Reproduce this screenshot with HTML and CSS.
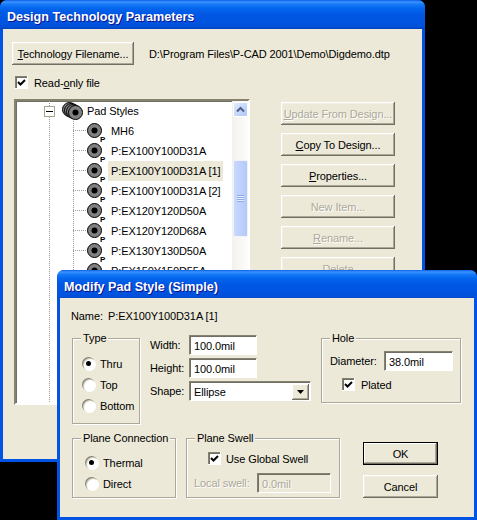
FILE: index.html
```html
<!DOCTYPE html>
<html lang="en">
<head>
<meta charset="utf-8">
<title>Design Technology Parameters</title>
<link rel="stylesheet" href="styles.css">
</head>
<body>
<svg class="defs" width="0" height="0" aria-hidden="true">
  <defs>
    <g id="disc">
      <circle cx="7.5" cy="7.5" r="7" fill="#808080" stroke="#000" stroke-width="1"/>
      <circle cx="7.5" cy="7.5" r="3" fill="#000"/>
    </g>
    <path id="tick" d="M1 4l2.500 2.500L8 2" fill="none" stroke="#000" stroke-width="2"/>
  </defs>
</svg>

<section class="window window-main">
  <header class="titlebar">Design Technology Parameters</header>
  <div class="client client-main">
    <div class="file-row">
      <button class="btn btn-file"><span><u>T</u>echnology Filename...</span></button>
      <span class="path">D:\Program Files\P-CAD 2001\Demo\Digdemo.dtp</span>
    </div>
    <label class="check check-readonly">
      <span class="checkbox"><svg width="9" height="9" viewBox="0 0 9 9"><use href="#tick"/></svg></span>
      <span>Read-<u>o</u>nly file</span>
    </label>
    <div class="main-row">
      <div class="tree">
        <div class="tree-items">
          <div class="tree-row tree-root">
            <span class="expander"></span>
            <svg class="stack-icon" width="21" height="18" viewBox="0 0 21 18">
              <use href="#disc" x="0" y="0"/><use href="#disc" x="2" y="1"/><use href="#disc" x="4" y="2"/><use href="#disc" x="6" y="3"/>
            </svg>
            <span class="tree-label">Pad Styles</span>
          </div>
          <div class="tree-row tree-leaf"><svg class="pad-icon" width="17" height="20" viewBox="0 0 17 20"><use href="#disc"/><text x="13" y="19" class="pad-p">P</text></svg><span class="tree-label">MH6</span></div>
          <div class="tree-row tree-leaf"><svg class="pad-icon" width="17" height="20" viewBox="0 0 17 20"><use href="#disc"/><text x="13" y="19" class="pad-p">P</text></svg><span class="tree-label">P:EX100Y100D31A</span></div>
          <div class="tree-row tree-leaf"><svg class="pad-icon" width="17" height="20" viewBox="0 0 17 20"><use href="#disc"/><text x="13" y="19" class="pad-p">P</text></svg><span class="tree-label tree-selected">P:EX100Y100D31A [1]</span></div>
          <div class="tree-row tree-leaf"><svg class="pad-icon" width="17" height="20" viewBox="0 0 17 20"><use href="#disc"/><text x="13" y="19" class="pad-p">P</text></svg><span class="tree-label">P:EX100Y100D31A [2]</span></div>
          <div class="tree-row tree-leaf"><svg class="pad-icon" width="17" height="20" viewBox="0 0 17 20"><use href="#disc"/><text x="13" y="19" class="pad-p">P</text></svg><span class="tree-label">P:EX120Y120D50A</span></div>
          <div class="tree-row tree-leaf"><svg class="pad-icon" width="17" height="20" viewBox="0 0 17 20"><use href="#disc"/><text x="13" y="19" class="pad-p">P</text></svg><span class="tree-label">P:EX120Y120D68A</span></div>
          <div class="tree-row tree-leaf"><svg class="pad-icon" width="17" height="20" viewBox="0 0 17 20"><use href="#disc"/><text x="13" y="19" class="pad-p">P</text></svg><span class="tree-label">P:EX130Y130D50A</span></div>
          <div class="tree-row tree-leaf"><svg class="pad-icon" width="17" height="20" viewBox="0 0 17 20"><use href="#disc"/><text x="13" y="19" class="pad-p">P</text></svg><span class="tree-label">P:EX150Y150D55A</span></div>
        </div>
        <div class="scrollbar">
          <div class="scroll-up"><svg width="9" height="7" viewBox="0 0 9 7"><path d="M1 5.500l3.500-3.500L8 5.500" fill="none" stroke="#4D6185" stroke-width="2"/></svg></div>
          <div class="scroll-thumb"><span class="grip"></span></div>
        </div>
      </div>
      <div class="side-buttons">
        <button class="btn btn-side" disabled><span><u>U</u>pdate From Design...</span></button>
        <button class="btn btn-side"><span><u>C</u>opy To Design...</span></button>
        <button class="btn btn-side"><span><u>P</u>roperties...</span></button>
        <button class="btn btn-side" disabled><span>New Item...</span></button>
        <button class="btn btn-side" disabled><span><u>R</u>ename...</span></button>
        <button class="btn btn-side" disabled><span>Delete</span></button>
      </div>
    </div>
  </div>
</section>

<section class="window window-pad">
  <header class="titlebar titlebar-pad">Modify Pad Style (Simple)</header>
  <div class="client client-pad">
    <div class="name-row"><span class="name-label">Name:</span><span>P:EX100Y100D31A [1]</span></div>
    <div class="upper-row">
      <div class="group group-type">
        <span class="group-title">Type</span>
        <div class="radio-row"><span class="radio radio-on"></span><span>Thru</span></div>
        <div class="radio-row"><span class="radio"></span><span>Top</span></div>
        <div class="radio-row"><span class="radio"></span><span>Bottom</span></div>
      </div>
      <div class="fields">
        <div class="field-row"><span class="field-label">Width:</span><span class="field field-size">100.0mil</span></div>
        <div class="field-row"><span class="field-label">Height:</span><span class="field field-size">100.0mil</span></div>
        <div class="field-row"><span class="field-label">Shape:</span><span class="field field-combo">Ellipse<span class="combo-arrow"><svg width="7" height="4" viewBox="0 0 7 4"><path d="M0 0h7L3.500 4z" fill="#000"/></svg></span></span></div>
      </div>
      <div class="group group-hole">
        <span class="group-title">Hole</span>
        <div class="field-row"><span class="hole-label">Diameter:</span><span class="field field-diameter">38.0mil</span></div>
        <label class="check check-plated">
          <span class="checkbox"><svg width="9" height="9" viewBox="0 0 9 9"><use href="#tick"/></svg></span>
          <span>Plated</span>
        </label>
      </div>
    </div>
    <div class="lower-row">
      <div class="group group-plane">
        <span class="group-title">Plane Connection</span>
        <div class="radio-row"><span class="radio radio-on"></span><span>Thermal</span></div>
        <div class="radio-row"><span class="radio"></span><span>Direct</span></div>
      </div>
      <div class="group group-swell">
        <span class="group-title">Plane Swell</span>
        <label class="check check-global">
          <span class="checkbox"><svg width="9" height="9" viewBox="0 0 9 9"><use href="#tick"/></svg></span>
          <span>Use Global Swell</span>
        </label>
        <div class="field-row swell-row"><span class="swell-label">Local swell:</span><span class="field field-swell">0.0mil</span></div>
      </div>
      <div class="dialog-buttons">
        <button class="btn btn-dialog btn-default"><span>OK</span></button>
        <button class="btn btn-dialog"><span>Cancel</span></button>
      </div>
    </div>
  </div>
</section>
</body>
</html>
```
FILE: styles.css
```css
* { box-sizing: border-box; }
html, body { margin: 0; height: 100%; }
body {
  position: relative;
  width: 477px;
  height: 520px;
  overflow: hidden;
  background: #000;
  font: 11px/14px "Liberation Sans", Arial, sans-serif;
  letter-spacing: -0.1px;
  color: #000;
}
.defs { position: absolute; }
u { text-underline-offset: 1px; }
span { white-space: nowrap; }

/* windows */
.window {
  position: absolute;
  display: flex;
  flex-direction: column;
  background: #0054e3;
  border-radius: 7px 7px 0 0;
  padding: 0 3px 3px;
  overflow: hidden;
}
.window-main { left: 0; top: 0; width: 425px; height: 462px; }
.window-pad { left: 57px; top: 270px; width: 420px; height: 250px; }
.titlebar {
  flex: none;
  height: 29px;
  margin: 0 -3px;
  padding: 10px 0 0 7px;
  background: linear-gradient(180deg, #0a5ee8 0, #3a93ff 2px, #1a7cf8 4px, #0466ee 8px, #0058e4 14px, #0054e0 22px, #0050d8 27px, #003fb8 29px);
  color: #fff;
  font: bold 12.6px/14px "Liberation Sans", Arial, sans-serif;
  letter-spacing: 0;
  text-shadow: 1px 1px #0f1089;
}
.titlebar-pad { height: 28px; }
.client { flex: 1; background: #ece9d8; min-height: 0; }

/* main window */
.client-main { padding: 13px 0 0 9px; }
.file-row { display: flex; align-items: center; gap: 15px; }
.check { display: flex; align-items: center; gap: 6px; }
.check-readonly { margin: 11px 0 10px 3px; height: 13px; }
.checkbox {
  flex: none;
  display: flex;
  align-items: center;
  justify-content: center;
  width: 13px;
  height: 13px;
  background: #fff;
  box-shadow: inset 1px 1px #85826f, inset 2px 2px #716f64;
  border-right: 1px solid #fff;
  border-bottom: 1px solid #fff;
}
.main-row { display: flex; align-items: flex-start; gap: 31px; margin-left: 2px; }

/* tree */
.tree {
  flex: none;
  display: flex;
  width: 236px;
  height: 306px;
  background: #fff;
  border: 2px solid;
  border-color: #85826f #fff #fff #85826f;
  box-shadow: inset 1px 1px #716f64;
}
.tree-items {
  flex: 1;
  min-width: 0;
  overflow: hidden;
  background-image:
    repeating-linear-gradient(180deg, #9a9a9a 0 1px, transparent 1px 2px),
    repeating-linear-gradient(180deg, #9a9a9a 0 1px, transparent 1px 2px);
  background-repeat: no-repeat;
  background-position: 33px 0, 57px 20px;
  background-size: 1px 100%, 1px 100%;
}
.tree-row { display: flex; align-items: center; height: 20px; position: relative; }
.tree-root { padding-left: 28px; }
.tree-leaf { padding-left: 57px; }
.tree-leaf::before {
  content: "";
  flex: none;
  width: 14px;
  height: 1px;
  margin-top: -1px;
  background: repeating-linear-gradient(90deg, #9a9a9a 0 1px, transparent 1px 2px);
}
.expander {
  flex: none;
  position: relative;
  width: 11px;
  height: 11px;
  margin-right: 7px;
  background: #fff;
  border: 1px solid #a9a68f;
}
.expander::after {
  content: "";
  position: absolute;
  left: 1px;
  top: 4px;
  width: 7px;
  height: 1px;
  background: #000;
}
.stack-icon { flex: none; margin-right: 4px; overflow: visible; }
.pad-icon { flex: none; margin: 0 4px 0 0; overflow: visible; position: relative; top: 2px; }
.pad-p { font: bold 8px "Liberation Sans", Arial, sans-serif; fill: #000; }
.tree-label { height: 20px; padding: 3px 3px 0; white-space: nowrap; }
.tree-root .tree-label { padding-left: 0; }
.tree-selected { background: #ece9d8; }

/* scrollbar */
.scrollbar {
  flex: none;
  width: 16px;
  padding: 1px 0 0 1px;
  background: linear-gradient(90deg, #f3f1ec, #fdfdfa);
}
.scroll-up {
  display: flex;
  align-items: center;
  justify-content: center;
  width: 15px;
  height: 15px;
  background: linear-gradient(135deg, #e1eafe, #aec8f7);
  border: 1px solid #fff;
  border-radius: 2px;
}
.scroll-thumb {
  display: flex;
  align-items: center;
  justify-content: center;
  width: 15px;
  height: 77px;
  margin-top: 43px;
  background: linear-gradient(90deg, #c9d8fc, #bcd0fb 60%, #b4c8f6);
  border: 1px solid #eef3fe;
  border-radius: 2px;
}
.grip {
  width: 7px;
  height: 7px;
  background: repeating-linear-gradient(180deg, #8daaf0 0 1px, #e8eefe 1px 2px);
}

/* buttons */
.btn {
  display: flex;
  align-items: center;
  justify-content: center;
  height: 23px;
  padding: 0;
  border: 0;
  background: #ece9d8;
  color: #000;
  font: inherit;
  letter-spacing: inherit;
  box-shadow: inset -1px -1px #716f64, inset 1px 1px #fff, inset -2px -2px #aca899, inset 2px 2px #f1efe2;
}
.btn[disabled] { color: #aca899; text-shadow: 1px 1px #fff; }
.btn-file { flex: none; width: 122px; }
.side-buttons { flex: none; display: flex; flex-direction: column; gap: 8px; margin-top: 3px; }
.btn-side { width: 114px; }

/* pad dialog */
.client-pad { padding: 11px 0 0 12px; }
.name-row { display: flex; height: 14px; margin-left: -1px; }
.name-label { width: 37px; }
.upper-row { display: flex; align-items: flex-start; margin-top: 12px; }
.lower-row { display: flex; align-items: flex-start; margin-top: 14px; }
.group {
  flex: none;
  position: relative;
  border: 1px solid #aca899;
  box-shadow: 1px 1px #fff, inset 1px 1px #fff;
}
.group-title {
  position: absolute;
  top: -8px;
  left: 8px;
  padding: 0 2px;
  background: #ece9d8;
  white-space: nowrap;
}
.group-type { width: 68px; height: 86px; margin-top: 3px; padding: 14px 0 0 9px; }
.group-hole { width: 140px; height: 65px; margin: 3px 0 0 10px; padding: 12px 0 0 8px; }
.group-plane { width: 104px; height: 60px; padding: 13px 0 0 12px; }
.group-swell { width: 154px; height: 60px; margin-left: 10px; padding: 13px 0 0 7px; }
.radio-row { display: flex; align-items: center; gap: 5px; height: 21px; }
.radio {
  flex: none;
  position: relative;
  width: 13px;
  height: 13px;
  border-radius: 50%;
  background: #fff;
  box-shadow: inset 1px 1px 0 #8a8778, inset 2px 2px 0 #d4d0c0, 1px 1px 0 #fff;
}
.radio-on::after {
  content: "";
  position: absolute;
  left: 4px;
  top: 4px;
  width: 5px;
  height: 5px;
  border-radius: 50%;
  background: #000;
}
.fields { flex: none; display: flex; flex-direction: column; gap: 3px; width: 161px; margin-left: 10px; }
.field-row { display: flex; align-items: center; }
.field-label { flex: none; width: 39px; }
.field {
  display: flex;
  align-items: center;
  height: 20px;
  padding: 1px 0 0 4px;
  background: #fff;
  border: 1px solid;
  border-color: #85826f #fff #fff #85826f;
  box-shadow: inset 1px 1px #716f64;
}
.field-size { width: 68px; }
.field-combo { width: 122px; justify-content: space-between; padding-right: 1px; }
.combo-arrow {
  display: flex;
  align-items: center;
  justify-content: center;
  width: 17px;
  height: 16px;
  background: #ece9d8;
  box-shadow: inset -1px -1px #716f64, inset 1px 1px #fff, inset -2px -2px #aca899;
}
.hole-label { flex: none; width: 54px; }
.field-diameter { width: 69px; }
.check-plated { margin: 7px 0 0 12px; height: 13px; }
.check-global { margin-left: 14px; height: 13px; gap: 5px; }
.swell-row { margin-top: 8px; }
.swell-label { flex: none; width: 63px; color: #aca899; text-shadow: 1px 1px #fff; }
.field-swell { width: 74px; background: #ece9d8; color: #aca899; text-shadow: 1px 1px #fff; }
.dialog-buttons { flex: none; display: flex; flex-direction: column; gap: 10px; margin: 4px 0 0 23px; }
.btn-dialog { width: 75px; }
.btn-default {
  border: 1px solid #000;
  box-shadow: inset -1px -1px #716f64, inset 1px 1px #fff, inset -2px -2px #aca899;
}
```
